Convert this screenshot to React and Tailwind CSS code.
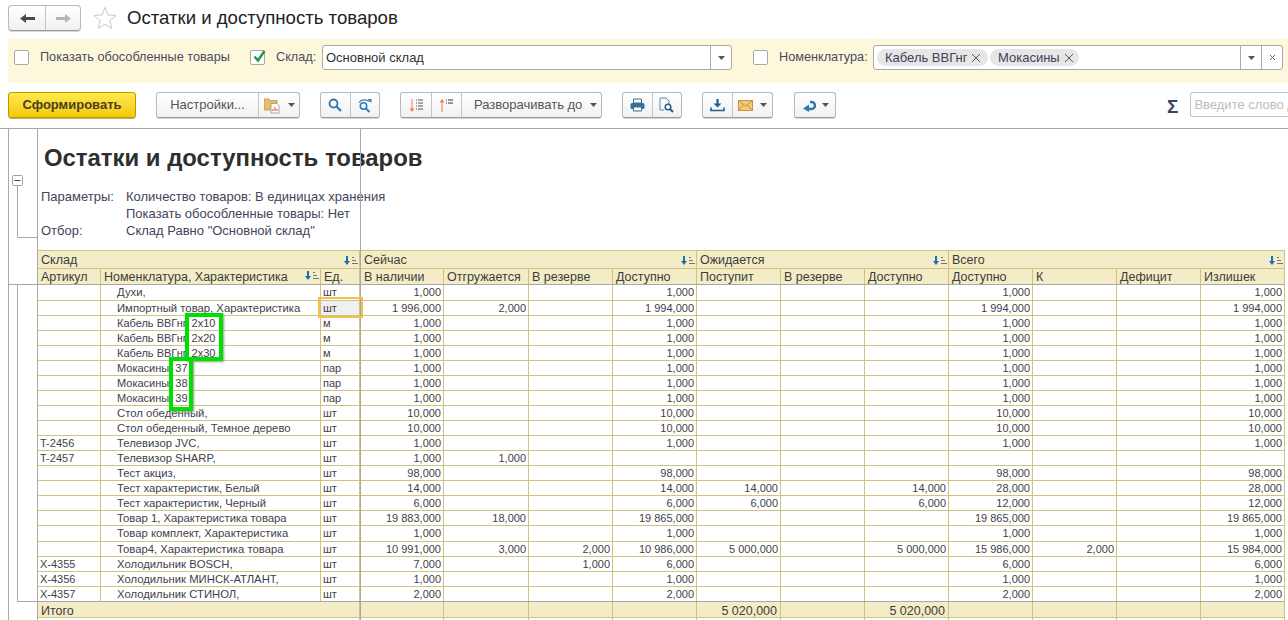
const GRID = 'grid grid-cols-[63px_220px_39px_84px_85px_84px_84px_84px_84px_84px_84px_84px_84px_84px_84px]'

const rows = [
  ['', 'Духи,', 'шт', '1,000', '', '', '1,000', '', '', '', '1,000', '', '', '1,000', 16],
  ['', 'Импортный товар, Характеристика', 'шт', '1 996,000', '2,000', '', '1 994,000', '', '', '', '1 994,000', '', '', '1 994,000'],
  ['', 'Кабель ВВГнг, 2х10', 'м', '1,000', '', '', '1,000', '', '', '', '1,000', '', '', '1,000'],
  ['', 'Кабель ВВГнг, 2х20', 'м', '1,000', '', '', '1,000', '', '', '', '1,000', '', '', '1,000'],
  ['', 'Кабель ВВГнг, 2х30', 'м', '1,000', '', '', '1,000', '', '', '', '1,000', '', '', '1,000'],
  ['', 'Мокасины, 37', 'пар', '1,000', '', '', '1,000', '', '', '', '1,000', '', '', '1,000'],
  ['', 'Мокасины, 38', 'пар', '1,000', '', '', '1,000', '', '', '', '1,000', '', '', '1,000'],
  ['', 'Мокасины, 39', 'пар', '1,000', '', '', '1,000', '', '', '', '1,000', '', '', '1,000'],
  ['', 'Стол обеденный,', 'шт', '10,000', '', '', '10,000', '', '', '', '10,000', '', '', '10,000'],
  ['', 'Стол обеденный, Темное дерево', 'шт', '10,000', '', '', '10,000', '', '', '', '10,000', '', '', '10,000'],
  ['T-2456', 'Телевизор JVC,', 'шт', '1,000', '', '', '1,000', '', '', '', '1,000', '', '', '1,000'],
  ['T-2457', 'Телевизор SHARP,', 'шт', '1,000', '1,000', '', '', '', '', '', '', '', '', ''],
  ['', 'Тест акциз,', 'шт', '98,000', '', '', '98,000', '', '', '', '98,000', '', '', '98,000'],
  ['', 'Тест характеристик, Белый', 'шт', '14,000', '', '', '14,000', '14,000', '', '14,000', '28,000', '', '', '28,000'],
  ['', 'Тест характеристик, Черный', 'шт', '6,000', '', '', '6,000', '6,000', '', '6,000', '12,000', '', '', '12,000'],
  ['', 'Товар 1, Характеристика товара', 'шт', '19 883,000', '18,000', '', '19 865,000', '', '', '', '19 865,000', '', '', '19 865,000'],
  ['', 'Товар комплект, Характеристика', 'шт', '1,000', '', '', '1,000', '', '', '', '1,000', '', '', '1,000', 16],
  ['', 'Товар4, Характеристика товара', 'шт', '10 991,000', '3,000', '2,000', '10 986,000', '5 000,000', '', '5 000,000', '15 986,000', '2,000', '', '15 984,000'],
  ['X-4355', 'Холодильник BOSCH,', 'шт', '7,000', '', '1,000', '6,000', '', '', '', '6,000', '', '', '6,000'],
  ['X-4356', 'Холодильник МИНСК-АТЛАНТ,', 'шт', '1,000', '', '', '1,000', '', '', '', '1,000', '', '', '1,000'],
  ['X-4357', 'Холодильник СТИНОЛ,', 'шт', '2,000', '', '', '2,000', '', '', '', '2,000', '', '', '2,000'],
]

const subHeads = ['Артикул', 'Номенклатура, Характеристика', 'Ед.', 'В наличии', 'Отгружается', 'В резерве', 'Доступно', 'Поступит', 'В резерве', 'Доступно', 'Доступно', 'К', 'Дефицит', 'Излишек']

function Caret() {
  return <svg width="7" height="4" viewBox="0 0 7 4" className="shrink-0"><path d="M0 0h7L3.5 4z" fill="#555" /></svg>
}

function SortIcon() {
  return (
    <svg width="15" height="11" viewBox="0 0 15 11" className="shrink-0">
      <path d="M4 1v6" stroke="#1f6fb0" strokeWidth="2" />
      <path d="M1 6h6l-3 4z" fill="#1f6fb0" />
      <path d="M9 2.5h2M9 5.5h4M9 8.5h6" stroke="#777" strokeWidth="1" />
    </svg>
  )
}

function Group({ children, className = '' }) {
  return (
    <div className={`flex h-[26px] rounded-[3px] border border-[#b9b9b9] border-b-[#9a9a9a] bg-linear-to-b from-white to-[#f1f1f1] shadow-[0_1px_0_#d8d8d8] ${className}`}>
      {children}
    </div>
  )
}

function Seg({ children, className = '' }) {
  return <div className={`flex items-center justify-center border-r border-[#c4c4c4] last:border-r-0 ${className}`}>{children}</div>
}

function Checkbox({ checked }) {
  return (
    <span className="relative block h-[15px] w-[15px] shrink-0 rounded-[2px] border border-[#a9a9a9] bg-white">
      {checked && (
        <svg width="17" height="15" viewBox="0 0 17 15" className="absolute -top-[2px] left-[1px]">
          <path d="M2.5 7.5l3.5 4L12.5 2" fill="none" stroke="#1c9a4a" strokeWidth="2.4" />
        </svg>
      )}
    </span>
  )
}

function Chip({ label, className }) {
  return (
    <span className={`flex h-[17px] items-center gap-[4px] rounded-full bg-[#e6e6e6] pl-[8px] text-[13px] text-[#40405c] ${className}`}>
      {label}
      <svg width="10" height="10" viewBox="0 0 10 10" className="shrink-0"><path d="M1 1l8 8M9 1l-8 8" stroke="#555" strokeWidth="1" /></svg>
    </span>
  )
}

function Gutter() {
  return (
    <div className="ml-[8px] w-[30px] shrink-0 border-x border-[#a8a8a8]">
      <svg width="28" height="491" viewBox="0 0 28 491" className="block">
        <rect x="3.5" y="46.5" width="10" height="10" rx="1" fill="#fff" stroke="#a0a0a0" />
        <path d="M5.5 51.5h6" stroke="#444" />
        <path d="M8.5 57v51.5H28" fill="none" stroke="#a8a8a8" />
        <path d="M0 155.5h28" stroke="#a8a8a8" />
        <path d="M8.5 156v316.5H28" fill="none" stroke="#a8a8a8" />
      </svg>
    </div>
  )
}

function HeadCell({ label, span, sort, className = 'pl-[3px]' }) {
  return (
    <div className={`flex h-[17px] items-center justify-between border-r border-[#cfc283] pr-[1px] pt-[1px] text-[12.5px] text-[#3c3c3c] ${span} ${className}`}>
      <span>{label}</span>
      {sort && <SortIcon />}
    </div>
  )
}

export default function App() {
  return (
    <div className="relative h-[620px] w-[1288px] overflow-hidden bg-white font-['Liberation_Sans',Arial,sans-serif] text-[#3c3c3c]">
      {/* title */}
      <div className="flex h-[39px] items-start pl-[8px] pt-[5px]">
        <Group className="h-[25px] w-[73px] rounded-[4px]">
          <Seg className="w-[37px]">
            <svg width="15" height="11" viewBox="0 0 15 11"><path d="M0 5.5L6 1v3h9v3H6v3z" fill="#4a4a4a" /></svg>
          </Seg>
          <Seg className="flex-1">
            <svg width="15" height="11" viewBox="0 0 15 11"><path d="M15 5.5L9 1v3H0v3h9v3z" fill="#b5b5b5" /></svg>
          </Seg>
        </Group>
        <svg width="24" height="24" viewBox="0 0 24 24" className="ml-[12px] mt-[1px]">
          <path d="M12 1.5l3 7.4 8 .6-6.1 5.1 1.9 7.8L12 18.2l-6.8 4.2 1.9-7.8L1 9.5l8-.6z" fill="none" stroke="#c9c9c9" />
        </svg>
        <h1 className="ml-[10px] text-[18.6px] leading-[26px] text-[#222]">Остатки и доступность товаров</h1>
      </div>

      {/* filters */}
      <div className="ml-[8px] h-[44px] bg-[#fdf8dc] pl-[6px] pt-[6px]">
        <div className="flex h-[25px] items-center text-[12.7px] text-[#4a4a5c]">
          <Checkbox />
          <span className="ml-[11px] w-[210px]">Показать обособленные товары</span>
          <Checkbox checked />
          <span className="ml-[11px] w-[46px]">Склад:</span>
          <div className="flex h-[25px] w-[410px] items-center rounded-[3px] border border-[#a9a9a9] bg-white pl-[3px] text-[13px] text-[#333]">
            <span className="flex-1">Основной склад</span>
            <span className="flex h-full w-[21px] items-center justify-center border-l border-[#a9a9a9]"><Caret /></span>
          </div>
          <span className="ml-[21px]"><Checkbox /></span>
          <span className="ml-[11px] w-[94px]">Номенклатура:</span>
          <div className="flex h-[25px] w-[410px] items-center rounded-[3px] border border-[#a9a9a9] bg-white pl-[3px]">
            <Chip label="Кабель ВВГнг" className="w-[111px]" />
            <Chip label="Мокасины" className="ml-[2px] w-[89px]" />
            <span className="flex-1" />
            <span className="flex h-full w-[21px] items-center justify-center border-l border-[#a9a9a9]"><Caret /></span>
            <span className="flex h-full w-[21px] items-center justify-center border-l border-[#a9a9a9]">
              <svg width="7" height="7" viewBox="0 0 7 7"><path d="M1 1l5 5M6 1l-5 5" stroke="#666" /></svg>
            </span>
          </div>
        </div>
      </div>

      {/* toolbar */}
      <div className="mt-[9px] flex h-[26px] items-start pl-[8px] text-[13px]">
        <button className="flex h-[26px] w-[128px] items-center justify-center rounded-[3px] border border-[#b59c00] bg-linear-to-b from-[#ffe94a] to-[#f5c800] font-bold text-[#4a4020] shadow-[0_1px_0_#cdb84d]">
          Сформировать
        </button>
        <Group className="ml-[20px] w-[144px]">
          <Seg className="w-[102px] text-[#555]">Настройки...</Seg>
          <Seg className="flex-1 gap-[8px]">
            <svg width="16" height="17" viewBox="0 0 16 17">
              <path d="M0 2h5l1 1.5h7V13H0z" fill="#e6bd6b" stroke="#b98d3a" strokeWidth="0.7" />
              <path d="M7 6.5h6l2 2V16H7z" fill="#fff" stroke="#8a9aa8" strokeWidth="0.8" />
              <path d="M9 14v-2M11 14v-4M13 14v-2" stroke="#d0503a" strokeWidth="1" />
            </svg>
            <Caret />
          </Seg>
        </Group>
        <Group className="ml-[20px] w-[60px]">
          <Seg className="flex-1">
            <svg width="14" height="14" viewBox="0 0 14 14"><circle cx="5.5" cy="5.5" r="4" fill="none" stroke="#2c7ab5" strokeWidth="1.8" /><path d="M8.5 8.5L13 13" stroke="#2c7ab5" strokeWidth="2.2" /></svg>
          </Seg>
          <Seg className="flex-1">
            <svg width="14" height="15" viewBox="0 0 14 15"><circle cx="5.5" cy="8" r="3.2" fill="none" stroke="#2c7ab5" strokeWidth="1.5" /><path d="M8 10.5l3.5 3.5" stroke="#2c7ab5" strokeWidth="2" /><path d="M1 4.5C3 1.5 8 1 11 3.5" fill="none" stroke="#2c7ab5" strokeWidth="1.3" /><path d="M9.5 1h4v4z" fill="#2c7ab5" /></svg>
          </Seg>
        </Group>
        <Group className="ml-[20px] w-[202px]">
          <Seg className="w-[31px]">
            <svg width="15" height="15" viewBox="0 0 15 15"><path d="M3 1v11" stroke="#e8804a" /><path d="M0.5 10.5h5L3 14z" fill="#e8804a" /><path d="M7 2h1M9 2h5M7 5h1M9 5h5M7 8h1M9 8h5M7 11h1M9 11h5" stroke="#555" /></svg>
          </Seg>
          <Seg className="w-[30px]">
            <svg width="15" height="15" viewBox="0 0 15 15"><path d="M3 3v11" stroke="#e8804a" /><path d="M0.5 4.5h5L3 1z" fill="#e8804a" /><path d="M7 2h1M9 2h5M7 5h1M9 5h5" stroke="#333" /></svg>
          </Seg>
          <Seg className="flex-1 justify-start gap-[8px] pl-[12px] text-[#555]">Разворачивать до <Caret /></Seg>
        </Group>
        <Group className="ml-[20px] w-[60px]">
          <Seg className="flex-1">
            <svg width="15" height="14" viewBox="0 0 15 14"><path d="M3.5 1h8v4h-8z" fill="#fff" stroke="#3a6f96" /><rect x="0.5" y="5" width="14" height="6" rx="1.5" fill="#3a6f96" /><path d="M3.5 9h8v4h-8z" fill="#fff" stroke="#3a6f96" /></svg>
          </Seg>
          <Seg className="flex-1">
            <svg width="15" height="16" viewBox="0 0 15 16"><path d="M1 1h6l3 3v4M5 13H1V1" fill="none" stroke="#5f8aa8" /><circle cx="9" cy="10" r="2.8" fill="#fff" stroke="#1f5f8f" strokeWidth="1.5" /><path d="M11 12l3 3" stroke="#1f5f8f" strokeWidth="2" /></svg>
          </Seg>
        </Group>
        <Group className="ml-[20px] w-[71px]">
          <Seg className="w-[30px]">
            <svg width="15" height="14" viewBox="0 0 15 14"><path d="M7.5 1v5" stroke="#1f6096" strokeWidth="2.2" /><path d="M3.5 5.5h8l-4 4z" fill="#1f6096" /><path d="M1 9.5v3h13v-3" fill="none" stroke="#1f6096" strokeWidth="1.6" /></svg>
          </Seg>
          <Seg className="flex-1 gap-[7px]">
            <svg width="15" height="11" viewBox="0 0 15 11"><rect x="0.5" y="0.5" width="14" height="10" fill="#f3c879" stroke="#c99436" /><path d="M1 1l6.5 5L14 1M1 10l4.5-5M14 10L9.5 5" fill="none" stroke="#c99436" /></svg>
            <Caret />
          </Seg>
        </Group>
        <Group className="ml-[21px] w-[42px] items-center justify-center gap-[6px]">
          <svg width="14" height="13" viewBox="0 0 14 13"><path d="M6 10h3.5a3.5 3.5 0 000-7H8" fill="none" stroke="#2c78b0" strokeWidth="2.4" /><path d="M7 5.5V13L1 9.5z" fill="#2c78b0" /></svg>
          <Caret />
        </Group>
        <span className="ml-[331px] mt-[3px] text-[19px] font-bold leading-[24px] text-[#34495e]">Σ</span>
        <div className="ml-[12px] flex h-[25px] flex-1 items-center overflow-hidden whitespace-nowrap rounded-l-[3px] border border-r-0 border-[#c4c4c4] pl-[3px] text-[#bdbdbd]">
          Введите слово д
        </div>
      </div>

      {/* report */}
      <div className="mt-[10px] flex border-t border-[#a8a8a8]">
        <Gutter />
        <div className="relative w-[1247px]">
          <div className="h-[121px] pl-[6px] pt-[14px] text-[13px]">
            <div className="text-[23.9px] font-bold leading-[30px] text-[#2e2e2e]">Остатки и доступность товаров</div>
            <div className="mt-[15px] grid grid-cols-[82px_auto] justify-start leading-[17px] text-[#44445a]">
              <span className="-ml-[3px]">Параметры:</span>
              <span>Количество товаров: В единицах хранения</span>
              <span />
              <span>Показать обособленные товары: Нет</span>
              <span className="-ml-[3px]">Отбор:</span>
              <span>Склад Равно "Основной склад"</span>
            </div>
          </div>

          <div className={`${GRID} border-t border-[#cfc283] bg-[#f4ecc6]`}>
            <HeadCell label="Склад" span="col-span-3" sort />
            <HeadCell label="Сейчас" span="col-span-4" sort className="pl-[4px]" />
            <HeadCell label="Ожидается" span="col-span-3" sort />
            <HeadCell label="Всего" span="col-span-4" sort />
          </div>
          <div className={`${GRID} border-y border-t-[#cfc283] border-b-[#a8a8a8] bg-[#f4ecc6]`}>
            {subHeads.map((head, i) => (
              <div key={i} className={`flex h-[15px] items-start justify-between overflow-hidden border-r border-[#cfc283] pr-[1px] pt-[1px] text-[12.5px] leading-[15px] text-[#3c3c3c] ${i === 3 ? 'pl-[4px]' : 'pl-[3px]'}`}>
                <span className="whitespace-nowrap">{head}</span>
                {i === 1 && <SortIcon />}
              </div>
            ))}
          </div>

          {rows.map((row, r) => (
            <div key={r} className={`${GRID} ${row[14] ? 'h-[16px]' : 'h-[15px]'} border-b border-[#cfc283]`}>
              {row.slice(0, 14).map((value, i) => (
                <div
                  key={i}
                  className={`overflow-hidden whitespace-nowrap border-r border-[#cfc283] leading-[14px] text-[#3f3f4a] ${r === 1 && i === 2 ? 'bg-[#f0f0f0]' : ''} ${i === 1 ? `pl-[16px] ${r >= 2 && r <= 7 ? 'text-[11px]' : 'text-[11.3px]'}` : i === 0 || i === 2 ? 'pl-[2px] text-[11px]' : 'pr-[2px] text-right text-[11px]'}`}
                >
                  {value}
                </div>
              ))}
            </div>
          ))}

          <div className={`${GRID} -mt-px h-[17px] border-y border-t-[#a8a8a8] border-b-[#cfc283] bg-[#f4ecc6] text-[12.5px]`}>
            <div className="col-span-3 border-r border-[#cfc283] pl-[3px]">Итого</div>
            {['', '', '', '', '5 020,000', '', '5 020,000', '', '', '', ''].map((value, i) => (
              <div key={i} className="border-r border-[#cfc283] pr-[3px] text-right">{value}</div>
            ))}
          </div>

          {/* fixed-column divider */}
          <div className="absolute bottom-0 left-[322px] top-0 w-px bg-[#a8a8a8]" />

          {/* selected cell */}
          <div className="absolute left-[280px] top-[168px] h-[21px] w-[45px] border-2 border-[#f5c04a]" />

          {/* green marks */}
          <div className="absolute left-[147px] top-[184px] h-[48px] w-[38px] border-4 border-[#00e000] shadow-[1px_1px_2px_#999]" />
          <div className="absolute left-[131px] top-[228px] h-[54px] w-[24px] border-4 border-[#00e000] shadow-[1px_1px_2px_#999]" />
        </div>
      </div>
    </div>
  )
}
